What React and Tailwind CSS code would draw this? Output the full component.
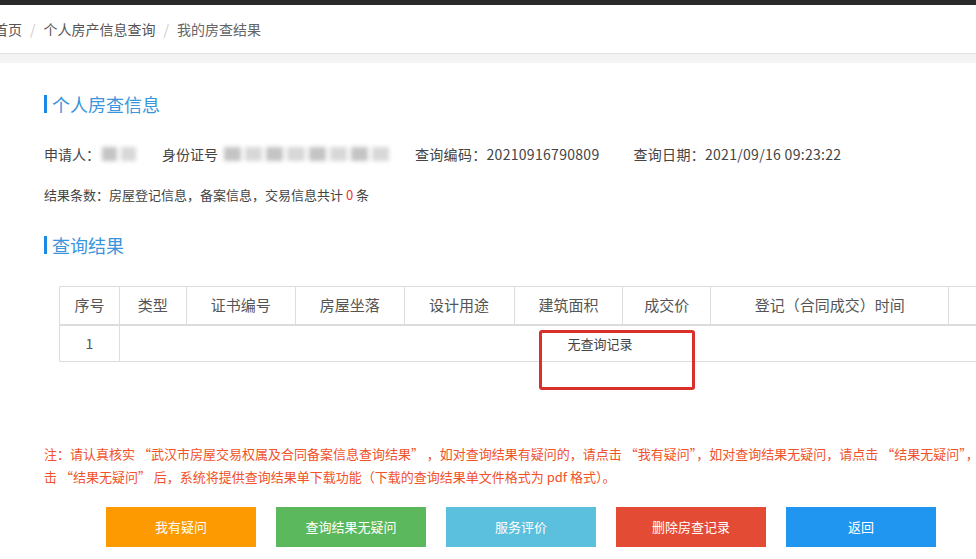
import React from 'react';

const cols = [
  { label: '序号', w: 60 },
  { label: '类型', w: 67 },
  { label: '证书编号', w: 109 },
  { label: '房屋坐落', w: 109 },
  { label: '设计用途', w: 110 },
  { label: '建筑面积', w: 109 },
  { label: '成交价', w: 88 },
  { label: '登记（合同成交）时间', w: 238 },
  { label: '交易状态', w: 132 },
];

const buttons = [
  { label: '我有疑问', cls: 'bg-[#fd9a01]' },
  { label: '查询结果无疑问', cls: 'bg-[#5cb85c]' },
  { label: '服务评价', cls: 'bg-[#5bc0de]' },
  { label: '删除房查记录', cls: 'bg-[#e34b35]' },
  { label: '返回', cls: 'bg-[#2196f0]' },
];

function SectionTitle({ children }) {
  return (
    <div className="flex items-center h-[24px]">
      <span className="w-[3px] h-[18px] bg-[#1e88e5] mr-[5px]" />
      <span className="text-[18px] text-[#3a95dc] leading-[24px]">{children}</span>
    </div>
  );
}

function Blur({ w }) {
  return (
    <span className="inline-flex items-center h-[22px] gap-[4px] blur-[2px]" style={{ width: w }}>
      {Array.from({ length: Math.max(1, Math.round(w / 22)) }).map((_, i) => (
        <span key={i} className={`h-[14px] flex-1 ${i % 2 ? 'bg-[#d8d8d8]' : 'bg-[#c4c4c4]'}`} />
      ))}
    </span>
  );
}

export default function App() {
  return (
    <div className="w-[976px] h-[559px] overflow-hidden bg-white text-[#333] font-['Microsoft_YaHei','Noto_Sans_CJK_SC',sans-serif]">
      {/* top bar */}
      <div className="h-[5px] bg-[#2a2a2a]" />

      {/* breadcrumb */}
      <div className="h-[48px] flex items-center ml-[-6px] text-[14px] text-[#555]">
        <span>首页</span>
        <span className="mx-[8px] text-[#ccc]">/</span>
        <span>个人房产信息查询</span>
        <span className="mx-[8px] text-[#ccc]">/</span>
        <span className="text-[#666]">我的房查结果</span>
      </div>
      <div className="h-[1px] bg-[#e2e2e2]" />
      <div className="h-[9px] bg-[#f4f4f4]" />

      <div className="pl-[44px] pt-[29px]">
        <SectionTitle>个人房查信息</SectionTitle>

        <div className="mt-[27px] flex items-center text-[14px] text-[#444] h-[22px] whitespace-nowrap">
          <span>申请人：</span>
          <span className="ml-[2px]"><Blur w={34} /></span>
          <span className="ml-[26px]">身份证号</span>
          <span className="ml-[6px]"><Blur w={165} /></span>
          <span className="ml-[26px] tracking-[0.3px]">查询编码：20210916790809</span>
          <span className="ml-[34px] tracking-[0.3px]">查询日期：2021/09/16 09:23:22</span>
        </div>

        <div className="mt-[19px] text-[13px] text-[#444] h-[22px] leading-[22px]">
          结果条数：房屋登记信息，备案信息，交易信息共计 <span className="text-[#e33]">0</span> 条
        </div>

        <div className="mt-[27px]">
          <SectionTitle>查询结果</SectionTitle>
        </div>

        {/* table */}
        <div className="relative mt-[29px] ml-[15px]">
          <table className="border-collapse text-[15px] text-[#555]" style={{ width: 1022 }}>
            <thead>
              <tr className="h-[38px]">
                {cols.map((c) => (
                  <th
                    key={c.label}
                    style={{ width: c.w }}
                    className="font-normal border border-[#ddd] border-b-2 border-b-[#dcdcdc] text-center whitespace-nowrap"
                  >
                    {c.label}
                  </th>
                ))}
              </tr>
            </thead>
            <tbody>
              <tr className="h-[37px]">
                <td className="border border-[#ddd] text-center text-[14px]">1</td>
                <td colSpan={8} className="border border-[#ddd] text-center text-[13px] text-[#444]">
                  无查询记录
                </td>
              </tr>
            </tbody>
          </table>
          {/* red annotation box */}
          <div className="absolute left-[480px] top-[44px] w-[156px] h-[60px] border-[3px] border-[#d9302a] rounded-[3px]" />
        </div>

        {/* note */}
        <div className="mt-[80px] text-[13px] text-[#f0522a] leading-[23px] whitespace-nowrap">
          <div>注：请认真核实 “武汉市房屋交易权属及合同备案信息查询结果” ，如对查询结果有疑问的，请点击 “我有疑问”，如对查询结果无疑问，请点击 “结果无疑问”，请点</div>
          <div>击 “结果无疑问” 后，系统将提供查询结果单下载功能（下载的查询结果单文件格式为 pdf 格式）。</div>
        </div>

        {/* buttons */}
        <div className="mt-[19px] ml-[62px] flex gap-[20px]">
          {buttons.map((b) => (
            <button
              key={b.label}
              className={`w-[150px] h-[40px] text-[13px] text-white ${b.cls}`}
            >
              {b.label}
            </button>
          ))}
        </div>
      </div>
    </div>
  );
}
